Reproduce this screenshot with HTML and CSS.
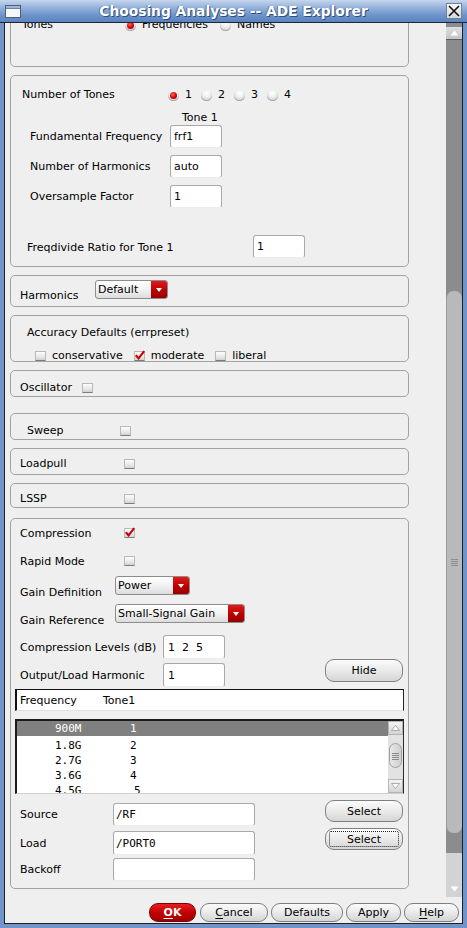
FILE: index.html
```html
<!DOCTYPE html>
<html>
<head>
<meta charset="utf-8">
<title>Choosing Analyses -- ADE Explorer</title>
<link rel="stylesheet" href="styles.css">
</head>
<body>
<div class="window">
  <div class="titlebar">
    <span class="winicon"><span class="winicon-bar"></span></span>
    <span class="title">Choosing Analyses -- ADE Explorer</span>
    <span class="closebtn"><svg width="14" height="14" viewBox="0 0 14 14"><path d="M2 2 L12 12 M12 2 L2 12" stroke="#111" stroke-width="1.6" fill="none"/></svg></span>
  </div>
  <div class="frame">
    <div class="client">
      <div class="scrollarea">
        <div class="viewport">
          <div class="content">
            <div class="panel p1">
              <div class="row">
                <span class="lbl w103">Tones</span>
                <span class="ritem w95"><span class="radio on"></span>Frequencies</span>
                <span class="ritem"><span class="radio"></span>Names</span>
              </div>
            </div>

            <div class="panel p2">
              <div class="row tones">
                <span class="lbl w146">Number of Tones</span>
                <span class="ritem w33"><span class="radio on"></span>1</span>
                <span class="ritem w33"><span class="radio"></span>2</span>
                <span class="ritem w33"><span class="radio"></span>3</span>
                <span class="ritem"><span class="radio"></span>4</span>
              </div>
              <div class="tonehdr">Tone 1</div>
              <div class="frow first">
                <span class="lbl w140">Fundamental Frequency</span>
                <span class="inp w52">frf1</span>
              </div>
              <div class="frow">
                <span class="lbl w140">Number of Harmonics</span>
                <span class="inp w52">auto</span>
              </div>
              <div class="frow">
                <span class="lbl w140">Oversample Factor</span>
                <span class="inp w52">1</span>
              </div>
              <div class="frow fdiv">
                <span class="lbl w226">Freqdivide Ratio for Tone 1</span>
                <span class="inp w52">1</span>
              </div>
            </div>

            <div class="panel p3">
              <div class="ddrow">
                <span class="lbl w75">Harmonics</span>
                <span class="dd w73"><span class="ddtext">Default</span><span class="ddbtn"></span></span>
              </div>
            </div>

            <div class="panel p4">
              <div class="row">Accuracy Defaults (errpreset)</div>
              <div class="row cbrow">
                <span class="citem"><span class="cb"></span>conservative</span>
                <span class="citem"><span class="cb on"><svg class="tick" width="12" height="11" viewBox="0 0 12 11"><path d="M1.8 5.2 L4.6 8.4 L10.2 1.2" stroke="#c80000" stroke-width="2.1" fill="none"/></svg></span>moderate</span>
                <span class="citem"><span class="cb"></span>liberal</span>
              </div>
            </div>

            <div class="panel p5">
              <div class="row"><span class="lbl w62">Oscillator</span><span class="cb"></span></div>
            </div>

            <div class="panel p6">
              <div class="row"><span class="lbl w93">Sweep</span><span class="cb"></span></div>
            </div>

            <div class="panel p7">
              <div class="row"><span class="lbl w104">Loadpull</span><span class="cb"></span></div>
            </div>

            <div class="panel p8">
              <div class="row"><span class="lbl w104">LSSP</span><span class="cb"></span></div>
            </div>

            <div class="panel p9">
              <div class="crow ra">
                <span class="lbl w104">Compression</span>
                <span class="cb on"><svg class="tick" width="12" height="11" viewBox="0 0 12 11"><path d="M1.8 5.2 L4.6 8.4 L10.2 1.2" stroke="#c80000" stroke-width="2.1" fill="none"/></svg></span>
              </div>
              <div class="crow rb">
                <span class="lbl w104">Rapid Mode</span>
                <span class="cb"></span>
              </div>
              <div class="ddrow rc">
                <span class="lbl w95">Gain Definition</span>
                <span class="dd w75"><span class="ddtext">Power</span><span class="ddbtn"></span></span>
              </div>
              <div class="ddrow rd">
                <span class="lbl w95">Gain Reference</span>
                <span class="dd w130"><span class="ddtext">Small-Signal Gain</span><span class="ddbtn"></span></span>
              </div>
              <div class="crow re">
                <span class="lbl w143">Compression Levels (dB)</span>
                <span class="inp w62">1&nbsp;&nbsp;2&nbsp;&nbsp;5</span>
              </div>
              <div class="crow rf">
                <span class="lbl w143">Output/Load Harmonic</span>
                <span class="inp w62">1</span>
                <span class="btn hide">Hide</span>
              </div>
              <div class="thead">
                <span class="tcol1">Frequency</span><span>Tone1</span>
              </div>
              <div class="list">
                <div class="rows">
                  <div class="lrow sel"><span class="lc1">900M</span><span>1</span></div>
                  <div class="lrow"><span class="lc1">1.8G</span><span>2</span></div>
                  <div class="lrow"><span class="lc1">2.7G</span><span>3</span></div>
                  <div class="lrow"><span class="lc1">3.6G</span><span>4</span></div>
                  <div class="lrow"><span class="lc1">4.5G</span><span class="shift">5</span></div>
                </div>
                <div class="lscroll">
                  <span class="lsb-btn"><svg width="9" height="6" viewBox="0 0 9 6"><path d="M0.5 5.5 L4.5 0.5 L8.5 5.5 Z" fill="#fff" stroke="#9a9a9a" stroke-width="0.8"/></svg></span>
                  <span class="lsb-track"><span class="lsb-thumb"><svg width="7" height="8" viewBox="0 0 7 8"><path d="M0 1.5 H7 M0 3.5 H7 M0 5.5 H7 M0 7.5 H7" stroke="#8a8a8a" stroke-width="1"/></svg></span></span>
                  <span class="lsb-btn"><svg width="9" height="6" viewBox="0 0 9 6"><path d="M0.5 0.5 L4.5 5.5 L8.5 0.5 Z" fill="#fff" stroke="#9a9a9a" stroke-width="0.8"/></svg></span>
                </div>
              </div>
              <div class="crow ri">
                <span class="lbl w93">Source</span>
                <span class="inp w142 mono">/RF</span>
                <span class="btn sel1">Select</span>
              </div>
              <div class="crow rj">
                <span class="lbl w93">Load</span>
                <span class="inp w142 mono">/PORT0</span>
                <span class="btn sel2"><span class="focus">Select</span></span>
              </div>
              <div class="crow rk">
                <span class="lbl w93">Backoff</span>
                <span class="inp w142"></span>
              </div>
            </div>
          </div>
        </div>
        <div class="vscroll">
          <span class="sb-up"><svg width="9" height="6" viewBox="0 0 9 6"><path d="M0.5 5.5 L4.5 0.5 L8.5 5.5 Z" fill="#fff"/></svg></span>
          <span class="sb-thumb"><svg width="7" height="8" viewBox="0 0 7 8"><path d="M0 1.5 H7 M0 3.5 H7 M0 5.5 H7 M0 7.5 H7" stroke="#8e8e8e" stroke-width="1"/></svg></span>
          <span class="sb-down"><svg width="9" height="6" viewBox="0 0 9 6"><path d="M0.5 0.5 L4.5 5.5 L8.5 0.5 Z" fill="#fff"/></svg></span>
        </div>
      </div>
      <div class="buttonbar">
        <span class="bbtn ok"><u>O</u>K</span>
        <span class="bbtn w68"><u>C</u>ancel</span>
        <span class="bbtn w72">Defaults</span>
        <span class="bbtn w55">Apply</span>
        <span class="bbtn w55"><u>H</u>elp</span>
      </div>
    </div>
  </div>
</div>
</body>
</html>
```

FILE: styles.css
```css
* { box-sizing: border-box; }
html, body { margin: 0; padding: 0; }
body {
  width: 467px;
  height: 928px;
  overflow: hidden;
  font-family: "DejaVu Sans", "Liberation Sans", sans-serif;
  font-size: 11px;
  color: #000;
  background: #6f92c6;
}
.window { width: 467px; height: 928px; display: flex; flex-direction: column; }

/* title bar */
.titlebar {
  height: 23px;
  flex: none;
  display: grid;
  grid-template-columns: 16px 1fr 16px;
  align-items: center;
  padding: 0 5px;
  background: linear-gradient(#c6d6ed 0%, #94b1db 35%, #6c93ca 70%, #5b84bf 100%);
  border-bottom: 1px solid #1c2538;
}
.winicon {
  width: 16px; height: 13px;
  border: 1px solid #4f5f78;
  background: #f4f6fa;
  display: block;
  margin-top: 1px;
}
.winicon-bar { display: block; height: 3px; background: #9fb6d8; border-bottom: 1px solid #6d82a3; }
.title {
  text-align: center;
  color: #fff;
  font-weight: bold;
  font-size: 13.8px;
  text-shadow: 1px 1px 0 #2e4f82, -1px 0 0 #5675a6;
}
.closebtn {
  width: 16px; height: 16px;
  border: 1px solid #6f7f98;
  background: linear-gradient(#f6f6f6, #d8d8d8);
  display: flex; align-items: center; justify-content: center;
}

/* frame */
.frame {
  flex: 1;
  display: flex;
  border-left: 4px solid #7194c9;
  border-right: 4px solid #7194c9;
  border-bottom: 4px solid #7194c9;
}
.client {
  flex: 1;
  display: flex;
  flex-direction: column;
  background: #efefef;
  border-left: 1px solid #1a1f28;
  border-right: 1px solid #1a1f28;
  border-bottom: 1px solid #1a1f28;
}
.scrollarea { height: 874px; display: flex; flex: none; }
.viewport { flex: 1; overflow: hidden; }
.content { padding-left: 5px; margin-top: -19px; display: flex; flex-direction: column; }

/* vertical scrollbar */
.vscroll {
  width: 16px;
  flex: none;
  background: #8c8c8c;
  display: flex;
  flex-direction: column;
  padding-top: 4px;
}
.sb-up {
  height: 13px;
  background: linear-gradient(#dedede, #c4c4c4);
  border-bottom: 1px solid #5e5e5e;
  display: flex; align-items: center; justify-content: center;
}
.sb-thumb {
  margin-top: 251px;
  height: 542px;
  background: #b9b9b9;
  border-left: 1px solid #9a9a9a;
  border-radius: 7px;
  display: flex; align-items: center; justify-content: center;
}
.sb-down {
  margin-top: 20px;
  height: 44px;
  background: #d3d3d3;
  display: flex; align-items: flex-end; justify-content: center;
  padding-bottom: 5px;
}

/* panels */
.panel {
  width: 399px;
  flex: none;
  border: 1px solid #a3a3a3;
  border-radius: 5px;
}
.row { display: flex; align-items: center; line-height: 14px; height: 14px; }
.lbl { flex: none; white-space: nowrap; }
.w33 { width: 33px; }
.w52 { width: 52px; }
.w55 { width: 55px; }
.w62 { width: 62px; }
.w68 { width: 68px; }
.w72 { width: 72px; }
.w73 { width: 73px; }
.w75 { width: 75px; }
.w93 { width: 93px; }
.w95 { width: 95px; }
.w103 { width: 103px; }
.w104 { width: 104px; }
.w130 { width: 130px; }
.w140 { width: 140px; }
.w142 { width: 142px; }
.w143 { width: 143px; }
.w146 { width: 146px; }
.w226 { width: 226px; }

.p1 { height: 63px; padding: 13px 0 0 11px; }
.p2 { height: 192px; margin-top: 8px; padding: 11px 0 0 11px; }
.p3 { height: 32px; margin-top: 8px; padding: 4px 0 0 9px; }
.p4 { height: 47px; margin-top: 8px; padding: 10px 0 0 16px; }
.p5 { height: 27px; margin-top: 8px; padding: 10px 0 0 9px; }
.p6 { height: 27px; margin-top: 16px; padding: 10px 0 0 16px; }
.p7 { height: 27px; margin-top: 8px; padding: 8px 0 0 9px; }
.p8 { height: 25px; margin-top: 8px; padding: 8px 0 0 9px; }
.p9 { height: 371px; margin-top: 10px; padding: 5px 0 0 9px; }

/* radios */
.ritem { display: inline-flex; align-items: center; gap: 6px; flex: none; }
.radio {
  width: 11px; height: 11px;
  border-radius: 50%;
  flex: none;
  position: relative;
  background: radial-gradient(circle at 50% 30%, #ffffff 0%, #f0f0f0 40%, #c9c9c9 85%, #b4b4b4 100%);
  box-shadow: inset 0 -1px 0 #a8a8a8;
}
.radio.on::after {
  content: "";
  position: absolute;
  left: 2px; top: 2px;
  width: 7px; height: 7px;
  border-radius: 50%;
  background: radial-gradient(circle at 40% 35%, #ff6060 0%, #d40000 55%, #9a0000 100%);
}
.tones { height: 16px; line-height: 16px; }
.tonehdr { margin: 8px 0 0 160px; line-height: 14px; height: 14px; }
.frow { display: flex; align-items: center; height: 23px; margin-top: 7px; padding-left: 8px; }
.frow.first { margin-top: 0; }
.frow.fdiv { margin-top: 27px; padding-left: 5px; }
.frow.fdiv .lbl { margin-top: 2px; }

/* inputs */
.inp {
  flex: none;
  height: 23px;
  display: flex;
  align-items: center;
  padding-left: 3px;
  background: #fff;
  border: 1px solid #a9a9a9;
  border-bottom-color: #ececec;
  border-radius: 3px;
  white-space: pre;
}
.inp.mono { font-family: "DejaVu Sans Mono", "Liberation Mono", monospace; padding-left: 2px; }

/* dropdowns */
.ddrow { display: flex; align-items: flex-start; }
.ddrow .lbl { margin-top: 9px; line-height: 14px; }
.p9 .ddrow .lbl { margin-top: 10px; }
.dd {
  flex: none;
  height: 19px;
  display: flex;
  border: 1px solid #8c8c8c;
  border-radius: 3px;
  background: linear-gradient(#ffffff, #f2f2f2 50%, #dcdcdc);
  overflow: hidden;
}
.ddtext { flex: 1; padding-left: 2px; line-height: 17px; }
.ddbtn {
  width: 16px;
  flex: none;
  background: linear-gradient(#e01a1a, #b80000 60%, #980000);
  display: flex; align-items: center; justify-content: center;
}
.ddbtn::after {
  content: "";
  border-left: 3.5px solid transparent;
  border-right: 3.5px solid transparent;
  border-top: 4px solid #fff;
  margin-top: 1px;
}

/* checkboxes */
.cbrow { margin: 9px 0 0 8px; gap: 11px; }
.citem { display: inline-flex; align-items: center; gap: 6px; }
.cb {
  width: 11px; height: 10px;
  flex: none;
  position: relative;
  border: 1px solid #b9b9b9;
  border-bottom-color: #7c7c7c;
  border-radius: 1px;
  background: linear-gradient(#fdfdfd, #e4e4e4 70%, #cfcfcf);
}
.tick { position: absolute; left: -1px; top: -2px; }

/* compression panel rows */
.crow { display: flex; align-items: center; }
.ra { height: 18px; }
.rb { height: 18px; margin-top: 10px; }
.rc { height: 19px; margin-top: 6px; }
.rd { height: 19px; margin-top: 9px; }
.re { height: 24px; margin-top: 12px; }
.re .inp, .rf .inp { height: 24px; padding-left: 4px; }
.rf { height: 24px; margin-top: 4px; }
.ri { height: 23px; margin-top: 9px; }
.rj { height: 24px; margin-top: 5px; }
.rj .inp { height: 24px; }
.rk { height: 23px; margin-top: 3px; }
.ri .inp { height: 23px; }

/* buttons */
.btn {
  flex: none;
  width: 78px;
  margin-left: auto;
  margin-right: 5px;
  display: flex; align-items: center; justify-content: center;
  border: 1px solid #808080;
  border-radius: 9px;
  background: linear-gradient(#fbfbfb, #ececec 45%, #d6d6d6);
}
.hide { height: 23px; align-self: flex-start; margin-top: -4px; }
.sel1 { height: 22px; align-self: flex-start; margin-top: -3px; }
.sel2 { height: 22px; align-self: flex-start; margin-top: -3px; padding: 2px 3px; }
.focus {
  flex: 1; height: 100%;
  display: flex; align-items: center; justify-content: center;
  border: 1px dotted #222;
  border-radius: 2px;
}

/* table header and list */
.thead {
  margin: 2px 0 0 -5px;
  width: 389px;
  height: 22px;
  background: #fff;
  border-top: 1px solid #111;
  border-left: 2px solid #111;
  border-right: 1px solid #222;
  border-bottom: 1px solid #e2e2e2;
  display: flex; align-items: center;
  padding-left: 3px;
}
.tcol1 { width: 83px; }
.list {
  margin: 8px 0 0 -5px;
  width: 389px;
  height: 75px;
  background: #fff;
  border-top: 2px solid #1a1a1a;
  border-left: 2px solid #1a1a1a;
  border-right: 1px solid #2a2a2a;
  border-bottom: 1px solid #cfcfcf;
  display: flex;
  overflow: hidden;
}
.rows { flex: 1; font-family: "DejaVu Sans Mono", "Liberation Mono", monospace; font-size: 11px; }
.lrow { height: 15px; line-height: 15px; display: flex; padding-left: 38px; white-space: pre; }
.lrow.sel { background: #808080; color: #fff; margin-bottom: 2px; }
.lc1 { width: 75px; }
.shift { margin-left: 4px; }
.lscroll { width: 15px; flex: none; display: flex; flex-direction: column; background: #e2e2e2; }
.lsb-btn {
  height: 14px; flex: none;
  background: linear-gradient(#f4f4f4, #d4d4d4);
  border: 1px solid #b4b4b4;
  display: flex; align-items: center; justify-content: center;
}
.lsb-track { flex: 1; display: flex; flex-direction: column; padding-top: 8px; }
.lsb-thumb {
  height: 25px;
  margin: 0 1px;
  border: 1px solid #a0a0a0;
  border-radius: 7px;
  background: linear-gradient(to right, #e8e8e8, #cfcfcf);
  display: flex; align-items: center; justify-content: center;
}

/* bottom buttons */
.buttonbar {
  height: 26px;
  flex: none;
  display: flex;
  justify-content: flex-end;
  gap: 3px;
  padding: 6px 3px 0 0;
}
.bbtn {
  height: 19px;
  display: flex; align-items: center; justify-content: center;
  border: 1px solid #7e7e7e;
  border-radius: 9px;
  background: linear-gradient(#fbfbfb, #ececec 45%, #d4d4d4);
}
.bbtn u { text-decoration: underline; text-underline-offset: 2px; }
.ok {
  width: 47px;
  margin-right: 1px;
  color: #fff;
  font-weight: bold;
  border-color: #7a0000;
  background: linear-gradient(#e62020, #c40000 50%, #9e0000);
}
```
